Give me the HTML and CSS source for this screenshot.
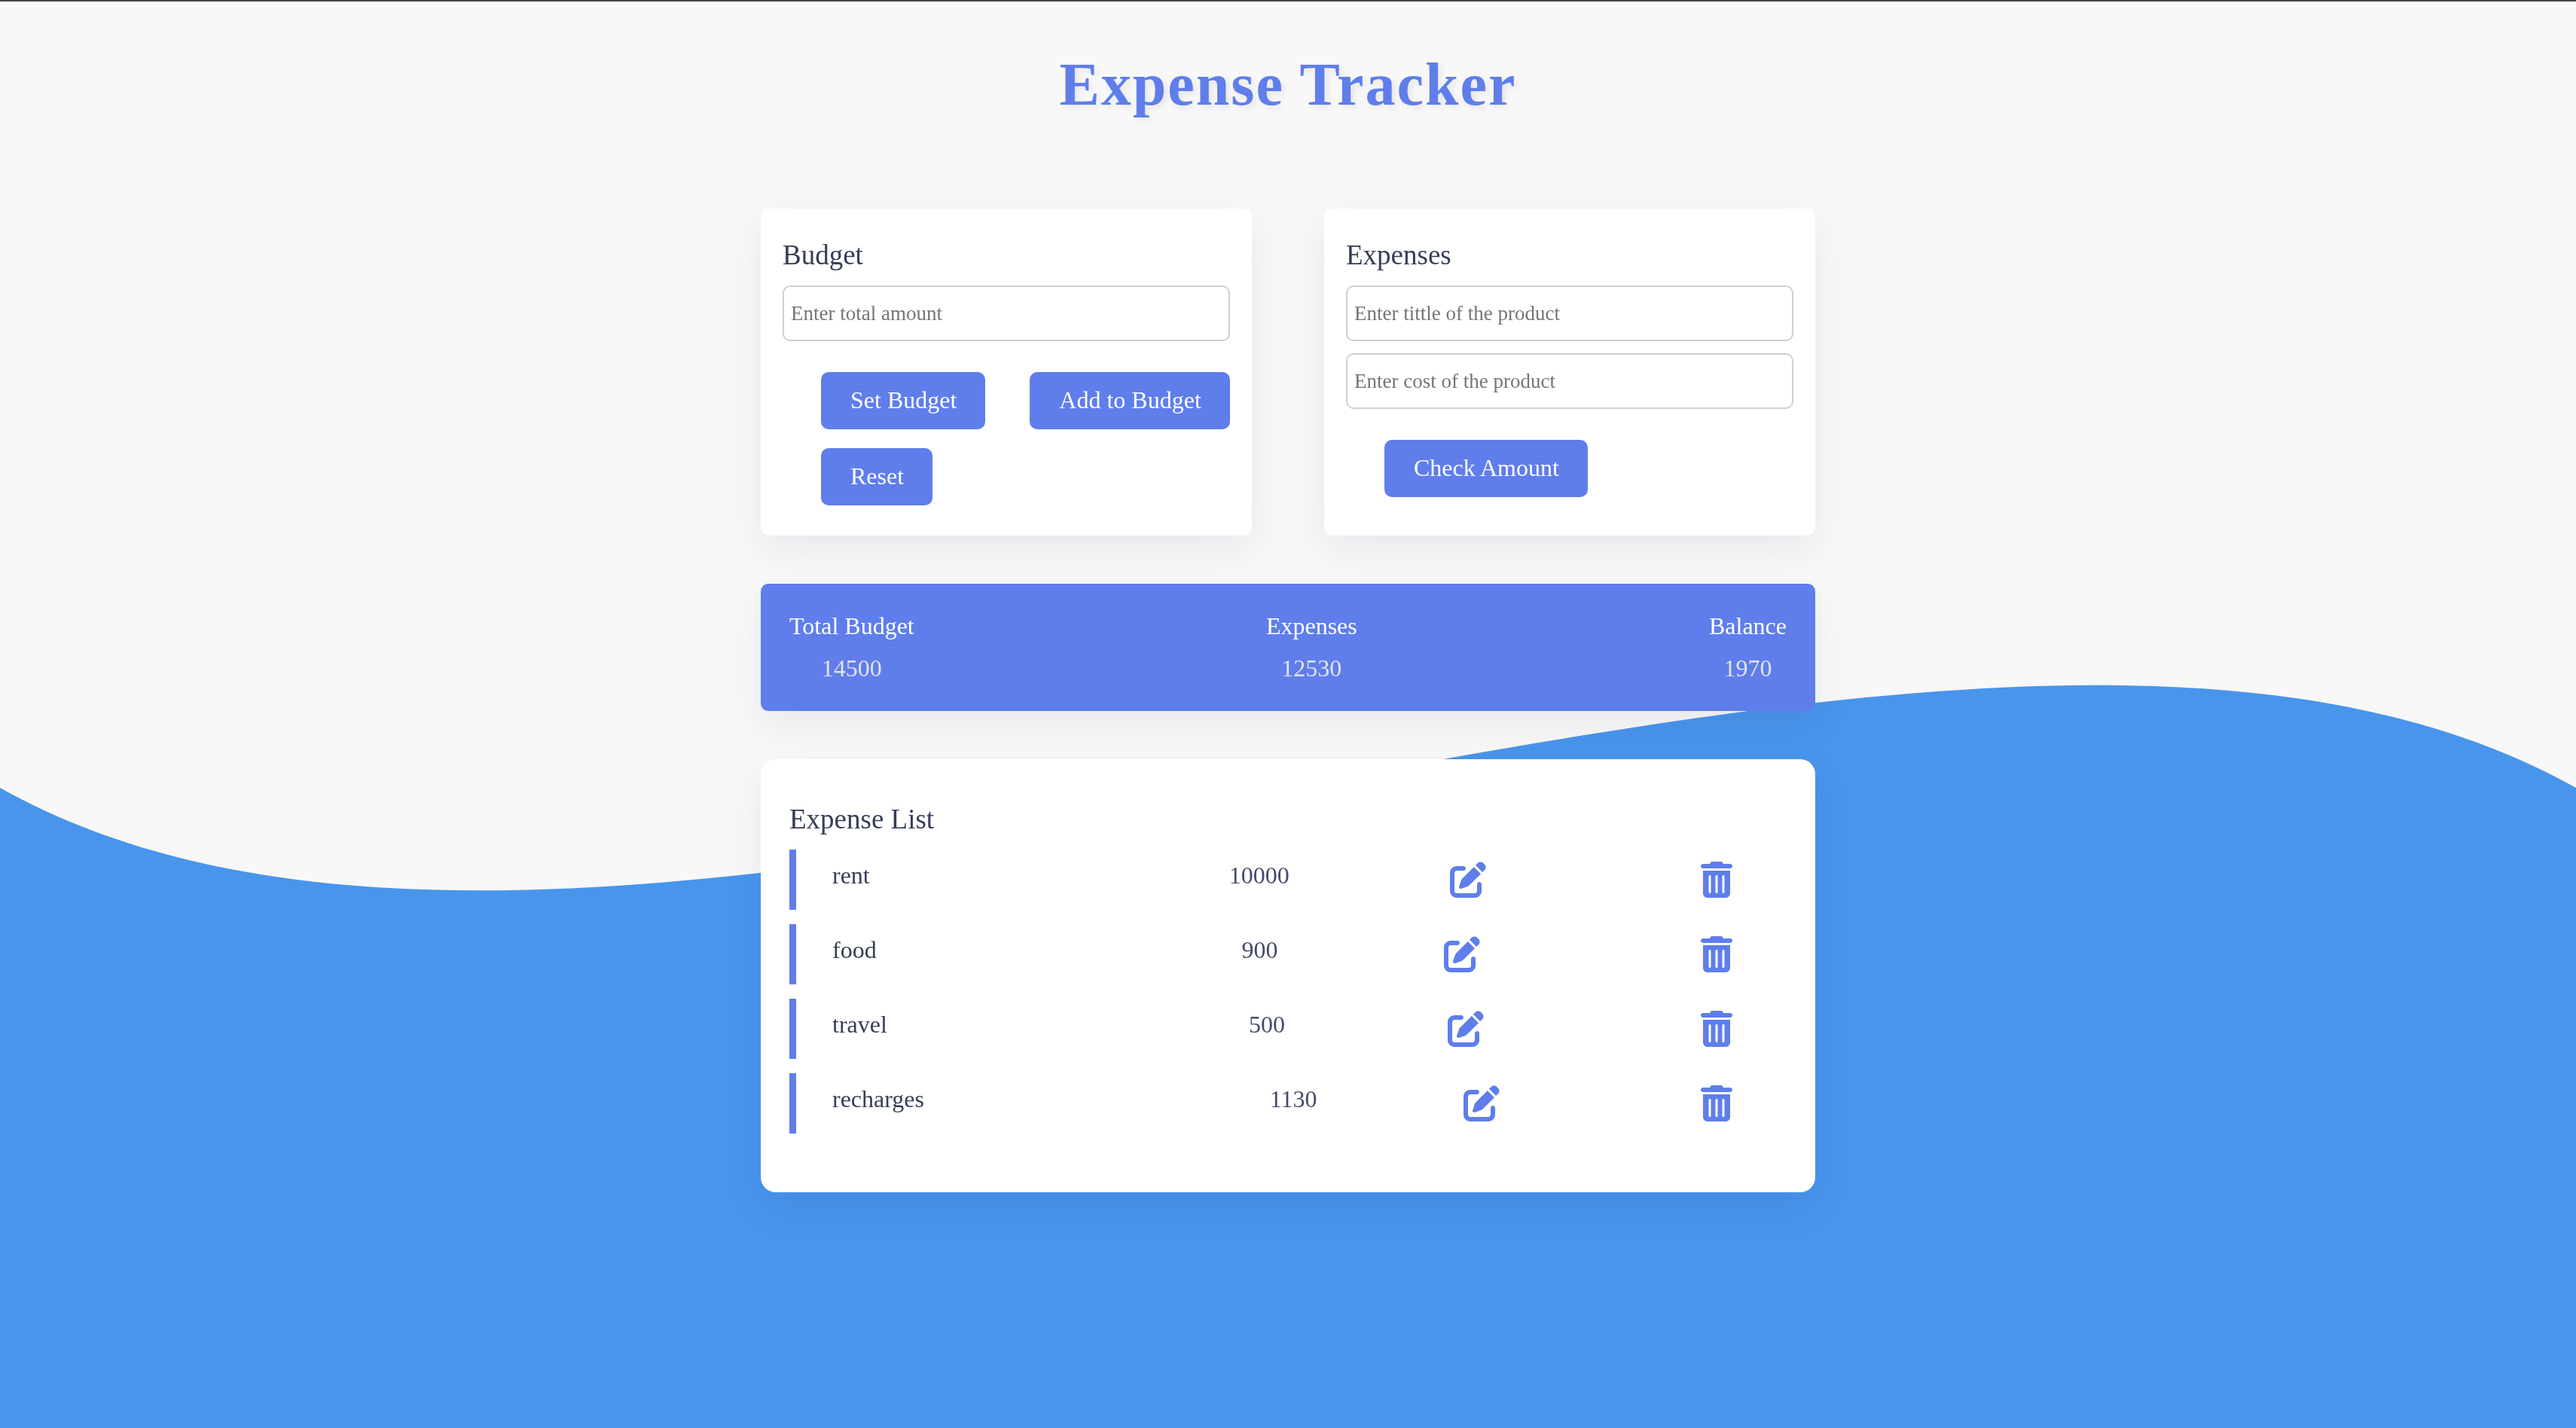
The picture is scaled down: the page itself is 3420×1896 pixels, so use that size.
FILE: index.html
```html
<!DOCTYPE html>
<html lang="en">
<head>
  <meta charset="utf-8">
  <meta name="viewport" content="width=device-width, initial-scale=1">
  <title>Expense Tracker</title>
  <link rel="stylesheet" href="styles.css">
</head>
<body>
  <svg class="wave" viewBox="0 0 3420 990" aria-hidden="true">
    <path d="M0 140C400 364 1000 274 1710 140S3020 -84 3420 140V990H0Z"/>
  </svg>

  <svg class="sprite" aria-hidden="true">
    <symbol id="icon-edit" viewBox="0 0 512 512">
      <path d="M471.6 21.7c-21.9-21.9-57.3-21.9-79.2 0L362.3 51.7l97.9 97.9 30.1-30.1c21.9-21.9 21.9-57.3 0-79.2L471.6 21.7zm-299.2 220c-6.1 6.1-10.8 13.6-13.5 21.9l-29.6 88.8c-2.9 8.6-.6 18.1 5.8 24.6s15.9 8.7 24.6 5.8l88.8-29.6c8.2-2.7 15.7-7.4 21.9-13.5L437.7 172.3 339.7 74.3 172.4 241.7zM96 64C43 64 0 107 0 160V416c0 53 43 96 96 96H352c53 0 96-43 96-96V320c0-17.7-14.3-32-32-32s-32 14.3-32 32v96c0 17.7-14.3 32-32 32H96c-17.7 0-32-14.3-32-32V160c0-17.7 14.3-32 32-32h96c17.7 0 32-14.3 32-32s-14.3-32-32-32H96z"/>
    </symbol>
    <symbol id="icon-trash" viewBox="0 0 448 512">
      <path d="M135.2 17.7C140.6 6.8 151.7 0 163.8 0H284.2c12.1 0 23.2 6.8 28.6 17.7L320 32h96c17.7 0 32 14.3 32 32s-14.3 32-32 32H32C14.3 96 0 81.7 0 64S14.3 32 32 32h96l7.2-14.3zM32 128H416V448c0 35.3-28.7 64-64 64H96c-35.3 0-64-28.7-64-64V128zm96 64c-8.8 0-16 7.2-16 16V432c0 8.8 7.2 16 16 16s16-7.2 16-16V208c0-8.8-7.2-16-16-16zm96 0c-8.8 0-16 7.2-16 16V432c0 8.8 7.2 16 16 16s16-7.2 16-16V208c0-8.8-7.2-16-16-16zm96 0c-8.8 0-16 7.2-16 16V432c0 8.8 7.2 16 16 16s16-7.2 16-16V208c0-8.8-7.2-16-16-16z"/>
    </symbol>
  </svg>

  <main class="container">
    <h1 class="title">Expense Tracker</h1>

    <div class="forms">
      <form class="card">
        <h2 class="heading"><label for="total-amount">Budget</label></h2>
        <input class="field" id="total-amount" type="text" inputmode="numeric" placeholder="Enter total amount">
        <div class="actions">
          <button class="btn" type="button">Set Budget</button>
          <button class="btn" type="button">Add to Budget</button>
          <button class="btn" type="button">Reset</button>
        </div>
      </form>

      <form class="card">
        <h2 class="heading">Expenses</h2>
        <input class="field" type="text" aria-label="Title of the product" placeholder="Enter tittle of the product">
        <input class="field" type="text" inputmode="numeric" aria-label="Cost of the product" placeholder="Enter cost of the product">
        <div class="actions">
          <button class="btn" type="button">Check Amount</button>
        </div>
      </form>
    </div>

    <dl class="summary">
      <div class="summary-item">
        <dt>Total Budget</dt>
        <dd>14500</dd>
      </div>
      <div class="summary-item">
        <dt>Expenses</dt>
        <dd>12530</dd>
      </div>
      <div class="summary-item">
        <dt>Balance</dt>
        <dd>1970</dd>
      </div>
    </dl>

    <section class="list-card">
      <h2 class="heading">Expense List</h2>
      <ul class="list">
        <li class="row">
          <span class="name">rent</span>
          <span class="amount">10000</span>
          <button class="icon-btn" type="button" aria-label="Edit rent"><svg class="icon-edit"><use href="#icon-edit"/></svg></button>
          <button class="icon-btn delete" type="button" aria-label="Delete rent"><svg class="icon-trash"><use href="#icon-trash"/></svg></button>
        </li>
        <li class="row">
          <span class="name">food</span>
          <span class="amount">900</span>
          <button class="icon-btn" type="button" aria-label="Edit food"><svg class="icon-edit"><use href="#icon-edit"/></svg></button>
          <button class="icon-btn delete" type="button" aria-label="Delete food"><svg class="icon-trash"><use href="#icon-trash"/></svg></button>
        </li>
        <li class="row">
          <span class="name">travel</span>
          <span class="amount">500</span>
          <button class="icon-btn" type="button" aria-label="Edit travel"><svg class="icon-edit"><use href="#icon-edit"/></svg></button>
          <button class="icon-btn delete" type="button" aria-label="Delete travel"><svg class="icon-trash"><use href="#icon-trash"/></svg></button>
        </li>
        <li class="row">
          <span class="name">recharges</span>
          <span class="amount">1130</span>
          <button class="icon-btn" type="button" aria-label="Edit recharges"><svg class="icon-edit"><use href="#icon-edit"/></svg></button>
          <button class="icon-btn delete" type="button" aria-label="Delete recharges"><svg class="icon-trash"><use href="#icon-trash"/></svg></button>
        </li>
      </ul>
    </section>
  </main>
</body>
</html>
```
FILE: styles.css
```css
:root {
  --primary: #5f7eeb;
  --ink: #363d55;
  --ink-soft: #454b69;
  --shadow: 0 19px 54px rgba(28, 0, 80, 0.07);
}

* {
  box-sizing: border-box;
  margin: 0;
  padding: 0;
}

body {
  min-height: 100vh;
  border-top: 2px solid #4b4248;
  background: #f8f8f8;
  color: var(--ink);
  font-family: "Liberation Serif", "Times New Roman", serif;
  font-size: 32px;
  line-height: 37px;
}

/* Decorative wave behind the page, pinned to the bottom of the window */
.wave {
  position: fixed;
  left: 0;
  bottom: 0;
  z-index: -1;
  width: 100%;
  height: auto;
  fill: #4995ec;
}

.sprite {
  display: none;
}

.container {
  width: 90%;
  max-width: 1400px;
  margin: 0 auto;
  padding: 64px 0;
}

.title {
  margin-bottom: 119px;
  color: var(--primary);
  font-size: 80px;
  line-height: 92px;
  letter-spacing: 2px;
  text-align: center;
  text-shadow: 4px 4px 8px rgba(0, 0, 0, 0.08);
}

.forms {
  display: grid;
  grid-template-columns: repeat(auto-fit, minmax(500px, 1fr));
  gap: 64px 96px;
}

.card {
  padding: 40px 29px;
  border-radius: 10px;
  background: #fff;
  box-shadow: var(--shadow);
}

.heading {
  margin-bottom: 19px;
  font-size: 37px;
  font-weight: 400;
  line-height: 43px;
}

.field {
  display: block;
  width: 100%;
  height: 74px;
  padding: 0 9px;
  border: 2px solid #d0d0d0;
  border-radius: 10px;
  background: #fff;
  color: var(--ink);
  font-family: inherit;
  font-size: 27px;
}

.field + .field {
  margin-top: 16px;
}

.field::placeholder {
  color: #757575;
  opacity: 1;
}

.actions {
  display: flex;
  flex-wrap: wrap;
  gap: 25px 59px;
  margin-top: 41px;
  padding-left: 51px;
}

.btn {
  height: 76px;
  padding: 0 38px 1px 39px;
  border: 0;
  border-radius: 10px;
  background: var(--primary);
  color: #fff;
  font-family: inherit;
  font-size: 32px;
  cursor: pointer;
}

.summary {
  display: flex;
  justify-content: space-between;
  margin-top: 64px;
  padding: 38px;
  border-radius: 10px;
  background: var(--primary);
  box-shadow: var(--shadow);
  color: #fff;
  text-align: center;
}

.summary-item {
  display: grid;
  gap: 19px;
}

.summary-item dd {
  color: #e3e3e3;
}

.list-card {
  margin-top: 64px;
  padding: 58px 38px 78px;
  border-radius: 20px;
  background: #fff;
  box-shadow: var(--shadow);
}

.list {
  display: grid;
  gap: 19px;
  list-style: none;
}

.row {
  display: flex;
  justify-content: space-between;
  align-items: flex-start;
  padding: 16px 0 16px 48px;
  border-left: 9px solid var(--primary);
}

.amount {
  margin-left: 264px;
  color: var(--ink-soft);
}

.icon-btn {
  display: flex;
  border: 0;
  background: none;
  color: var(--primary);
  cursor: pointer;
}

.delete {
  margin: 0 72px;
}

.icon-edit,
.icon-trash {
  width: 48px;
  height: 48px;
  fill: currentColor;
}

.icon-trash {
  width: 42px;
}
```
